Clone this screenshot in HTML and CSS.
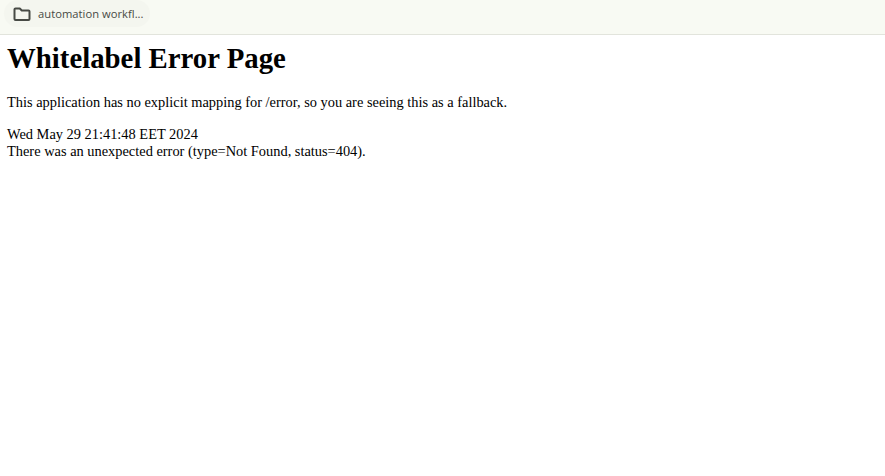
FILE: index.html
```html
<!DOCTYPE html>
<html lang="en">
<head>
<meta charset="utf-8">
<title>Whitelabel Error Page</title>
<link rel="stylesheet" href="styles.css">
</head>
<body>
<div class="bookmarks">
  <div class="chip">
    <svg class="folder" width="18" height="14" viewBox="0 0 18 14" fill="none" stroke="#474a45" stroke-width="2" stroke-linejoin="round"><path d="M1.5 12V2.5a1 1 0 0 1 1-1h4.3l2 2h6.7a1 1 0 0 1 1 1V12a1 1 0 0 1-1 1h-13a1 1 0 0 1-1-1z"/></svg>
    <span class="label">automation workfl...</span>
  </div>
</div>
<main class="content">
  <h1 class="title">Whitelabel Error Page</h1>
  <p class="lead">This application has no explicit mapping for /error, so you are seeing this as a fallback.</p>
  <div class="when">Wed May 29 21:41:48 EET 2024</div>
  <div class="detail">There was an unexpected error (type=Not Found, status=404).</div>
</main>
</body>
</html>
```

FILE: styles.css
```css
html, body { margin: 0; padding: 0; background: #fff; }
body { font-family: "Liberation Serif", "Times New Roman", serif; font-size: 14.4px; color: #000; overflow: hidden; }
.bookmarks { height: 34px; background: #f8faf3; border-bottom: 1px solid #e2e4dc; display: flex; align-items: flex-start; padding-left: 4px; box-sizing: content-box; }
.chip { height: 27px; display: flex; align-items: center; gap: 7px; padding: 0 6px 0 9px; border-radius: 14px; background: #f4f6ef; }
.folder { display: block; }
.label { font-family: "Open Sans", "Noto Sans", sans-serif; font-size: 11.2px; letter-spacing: 0.03px; color: #474a45; white-space: nowrap; }
.content { padding: 0 7px; }
.title { font-size: 28.8px; font-weight: bold; line-height: 34px; margin: 6px 0 19px; }
.lead { margin: 0 0 16px; line-height: 16px; }
.when { line-height: 16px; margin-bottom: 1px; }
.detail { line-height: 16px; }
```
